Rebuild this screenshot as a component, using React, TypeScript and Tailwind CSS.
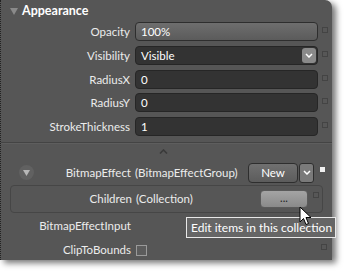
import React from "react";

const font = { fontFamily: 'Lato, "Open Sans", sans-serif' };

function Ind({ white = false }: { white?: boolean }) {
  return white ? (
    <div className="w-[5px] h-[5px] bg-[#f0f0f0] ml-[6px] mt-[-6px]" />
  ) : (
    <div className="w-[6px] h-[6px] border border-[#444] bg-[#575757] ml-[4px] mt-[-4px]" />
  );
}

const T = "text-[11.5px] text-[#ececec] leading-none";

function Row({ label, children, mt }: { label: string; children: React.ReactNode; mt: string }) {
  return (
    <div className={`flex items-center h-[19px] ${mt}`}>
      <div className={`w-[130px] text-right pr-[1px] ${T}`}>{label}</div>
      <div className="ml-[4px] w-[183px] h-[19px]">{children}</div>
      <Ind />
    </div>
  );
}

export default function App() {
  return (
    <div className="w-[346px] h-[273px] bg-white relative overflow-hidden" style={font}>
      <div className="w-[332px] h-[260px] bg-[#565656] rounded-tr-[7px] border-l border-dotted border-l-[#222] shadow-[4px_3px_6px_rgba(0,0,0,0.55)] relative">
        {/* header */}
        <div className="flex items-center h-[22px] pl-[9px]">
          <svg width="8" height="7" viewBox="0 0 8 7"><path d="M0 0 L8 0 L4 7 Z" fill="#8a8a8a" /></svg>
          <span className="ml-[4px] text-[12.5px] font-bold text-white leading-none">Appearance</span>
        </div>
        <Row label="Opacity" mt="mt-0">
          <div className="h-full rounded-[4px] border border-[#2e2e2e] bg-gradient-to-b from-[#6e6e6e] to-[#5b5b5b] flex items-center pl-[5px] text-[11.5px] text-white">100%</div>
        </Row>
        <Row label="Visibility" mt="mt-[5px]">
          <div className="h-full rounded-[4px] border border-[#262626] bg-[#333] flex items-center pl-[5px] text-[11.5px] text-white relative">
            Visible
            <div className="absolute right-[1px] top-[1px] w-[14px] h-[15px] rounded-[3px] bg-[#8a8a8a] flex items-center justify-center">
              <svg width="8" height="5" viewBox="0 0 8 5"><path d="M1 1 L4 4 L7 1" stroke="white" strokeWidth="1.5" fill="none" /></svg>
            </div>
          </div>
        </Row>
        <Row label="RadiusX" mt="mt-[5px]">
          <div className="h-full rounded-[4px] border border-[#262626] bg-[#333] flex items-center pl-[5px] text-[11.5px] text-white">0</div>
        </Row>
        <Row label="RadiusY" mt="mt-[4px]">
          <div className="h-full rounded-[4px] border border-[#262626] bg-[#333] flex items-center pl-[5px] text-[11.5px] text-white">0</div>
        </Row>
        <Row label="StrokeThickness" mt="mt-[5px]">
          <div className="h-full rounded-[4px] border border-[#262626] bg-[#333] flex items-center pl-[5px] text-[11.5px] text-white">1</div>
        </Row>
        {/* separator */}
        <div className="mt-[6px] h-[1px] bg-[#444] border-b border-[#5e5e5e] box-content" />
        <div className="flex justify-center h-[10px] items-center">
          <svg width="9" height="5" viewBox="0 0 9 5" className="ml-[-6px] mt-[4px]"><path d="M1 4.5 L4.5 1 L8 4.5" stroke="#3a3a3a" strokeWidth="1.6" fill="none" /></svg>
        </div>
        {/* BitmapEffect */}
        <div className="flex items-center h-[21px] mt-[8px]">
          <div className="w-[130px] flex items-center">
            <div className="ml-[18px] w-[15px] h-[15px] rounded-full bg-[#616161] flex items-center justify-center">
              <svg width="7" height="6" viewBox="0 0 7 6"><path d="M0 0 L7 0 L3.5 6 Z" fill="#b8b8b8" /></svg>
            </div>
            <span className={`ml-auto ${T}`}>BitmapEffect</span>
          </div>
          <span className={`ml-[4px] w-[113px] ${T}`}>(BitmapEffectGroup)</span>
          <div className="w-[50px] h-[20px] rounded-[4px] border border-[#2e2e2e] bg-gradient-to-b from-[#707070] to-[#5c5c5c] flex items-center justify-center text-[11.5px] text-white">New</div>
          <div className="ml-[1px] w-[15px] h-[20px] rounded-[3px] border border-[#2e2e2e] bg-[#7a7a7a] flex items-center justify-center">
            <svg width="8" height="5" viewBox="0 0 8 5"><path d="M1 1 L4 4 L7 1" stroke="white" strokeWidth="1.5" fill="none" /></svg>
          </div>
          <Ind white />
        </div>
        {/* Children box */}
        <div className="mt-[2px] ml-[9px] w-[313px] h-[28px] rounded-[4px] border border-[#464646] flex items-center">
          <div className={`w-[121px] text-right ${T}`}>Children</div>
          <span className={`ml-[4px] ${T}`}>(Collection)</span>
          <div className="ml-auto w-[48px] h-[18px] rounded-[4px] border border-[#5a5a5a] bg-gradient-to-b from-[#a4a4a4] to-[#8a8a8a] flex items-center justify-center text-[11px] text-[#222] leading-none pb-[3px]">...</div>
          <div className="w-[6px] h-[6px] border border-[#444] bg-[#575757] ml-[5px] mr-[3px] mt-[-8px]" />
        </div>
        {/* BitmapEffectInput */}
        <div className="flex items-center h-[20px] mt-[3px]">
          <div className={`w-[130px] text-right ${T}`}>BitmapEffectInput</div>
        </div>
        {/* ClipToBounds */}
        <div className="flex items-center h-[20px] mt-[4px]">
          <div className={`w-[130px] text-right ${T}`}>ClipToBounds</div>
          <div className="ml-[5px] w-[11px] h-[11px] border border-[#9a9a9a] bg-[#5c5c5c]" />
          <div className="ml-auto mr-[5px] w-[6px] h-[6px] border border-[#444] bg-[#575757] mt-[-6px]" />
        </div>
      </div>
      {/* tooltip */}
      <div className="absolute left-[186px] top-[217px] w-[150px] h-[21px] bg-[#666] border border-[#e8e8e8] flex items-center pl-[4px] text-[12px] text-white leading-none whitespace-nowrap">
        Edit items in this collection
      </div>
      {/* cursor */}
      <svg className="absolute left-[299px] top-[206px]" width="14" height="22" viewBox="0 0 14 22">
        <path d="M1 1 L1 16 L4.5 12.5 L7 18.5 L9.5 17.5 L7 11.5 L12 11.5 Z" fill="white" stroke="black" strokeWidth="1" strokeLinejoin="round" />
      </svg>
    </div>
  );
}
